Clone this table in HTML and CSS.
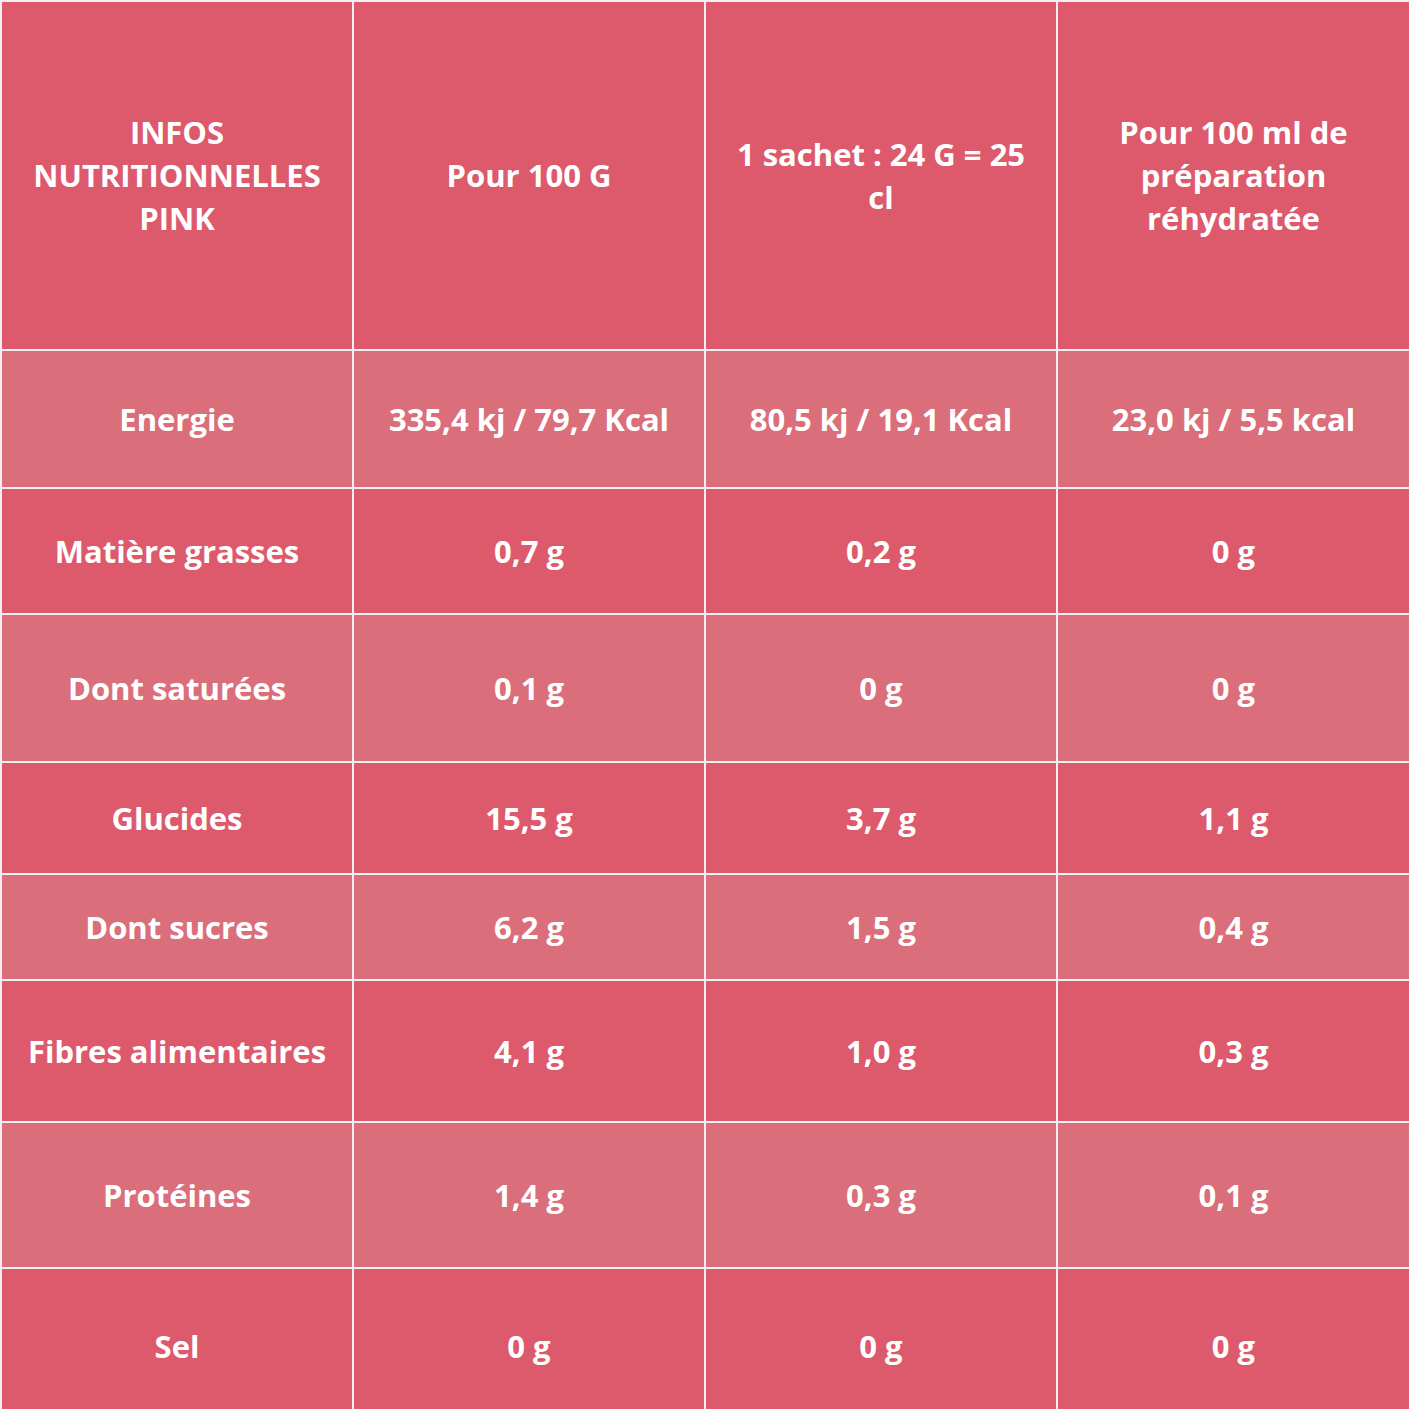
FILE: index.html
```html
<!DOCTYPE html>
<html lang="fr">
<head>
<meta charset="utf-8">
<title>Infos nutritionnelles Pink</title>
<link rel="stylesheet" href="styles.css">
</head>
<body>
<div class="table">
  <div class="cell head">INFOS NUTRITIONNELLES PINK</div>
  <div class="cell head">Pour 100 G</div>
  <div class="cell head">1 sachet : 24 G = 25 cl</div>
  <div class="cell head">Pour 100 ml de préparation réhydratée</div>

  <div class="cell light">Energie</div>
  <div class="cell light">335,4 kj / 79,7 Kcal</div>
  <div class="cell light">80,5 kj / 19,1 Kcal</div>
  <div class="cell light">23,0 kj / 5,5 kcal</div>

  <div class="cell dark">Matière grasses</div>
  <div class="cell dark">0,7 g</div>
  <div class="cell dark">0,2 g</div>
  <div class="cell dark">0 g</div>

  <div class="cell light">Dont saturées</div>
  <div class="cell light">0,1 g</div>
  <div class="cell light">0 g</div>
  <div class="cell light">0 g</div>

  <div class="cell dark">Glucides</div>
  <div class="cell dark">15,5 g</div>
  <div class="cell dark">3,7 g</div>
  <div class="cell dark">1,1 g</div>

  <div class="cell light">Dont sucres</div>
  <div class="cell light">6,2 g</div>
  <div class="cell light">1,5 g</div>
  <div class="cell light">0,4 g</div>

  <div class="cell dark">Fibres alimentaires</div>
  <div class="cell dark">4,1 g</div>
  <div class="cell dark">1,0 g</div>
  <div class="cell dark">0,3 g</div>

  <div class="cell light">Protéines</div>
  <div class="cell light">1,4 g</div>
  <div class="cell light">0,3 g</div>
  <div class="cell light">0,1 g</div>

  <div class="cell dark">Sel</div>
  <div class="cell dark">0 g</div>
  <div class="cell dark">0 g</div>
  <div class="cell dark">0 g</div>
</div>
</body>
</html>
```
FILE: styles.css
```css
html, body {
  margin: 0;
  padding: 0;
  background: #ffffff;
  overflow: hidden;
}

.table {
  width: 1409px;
  box-sizing: border-box;
  padding: 2px 0 2px 2px;
  background: #f7eef0;
  display: grid;
  grid-template-columns: 350px 350px 350px 1fr;
  grid-template-rows: 347px 136px 124px 146px 110px 104px 140px 144px 154px;
  gap: 2px;
  font-family: "Open Sans", "Liberation Sans", sans-serif;
  font-weight: 700;
  font-size: 31px;
  line-height: 43px;
  color: #ffffff;
}

.cell {
  display: flex;
  align-items: center;
  justify-content: center;
  text-align: center;
  padding: 0 20px;
}

.head,
.dark {
  background: #dc5a6b;
}

.light {
  background: #da6e7a;
}
```
